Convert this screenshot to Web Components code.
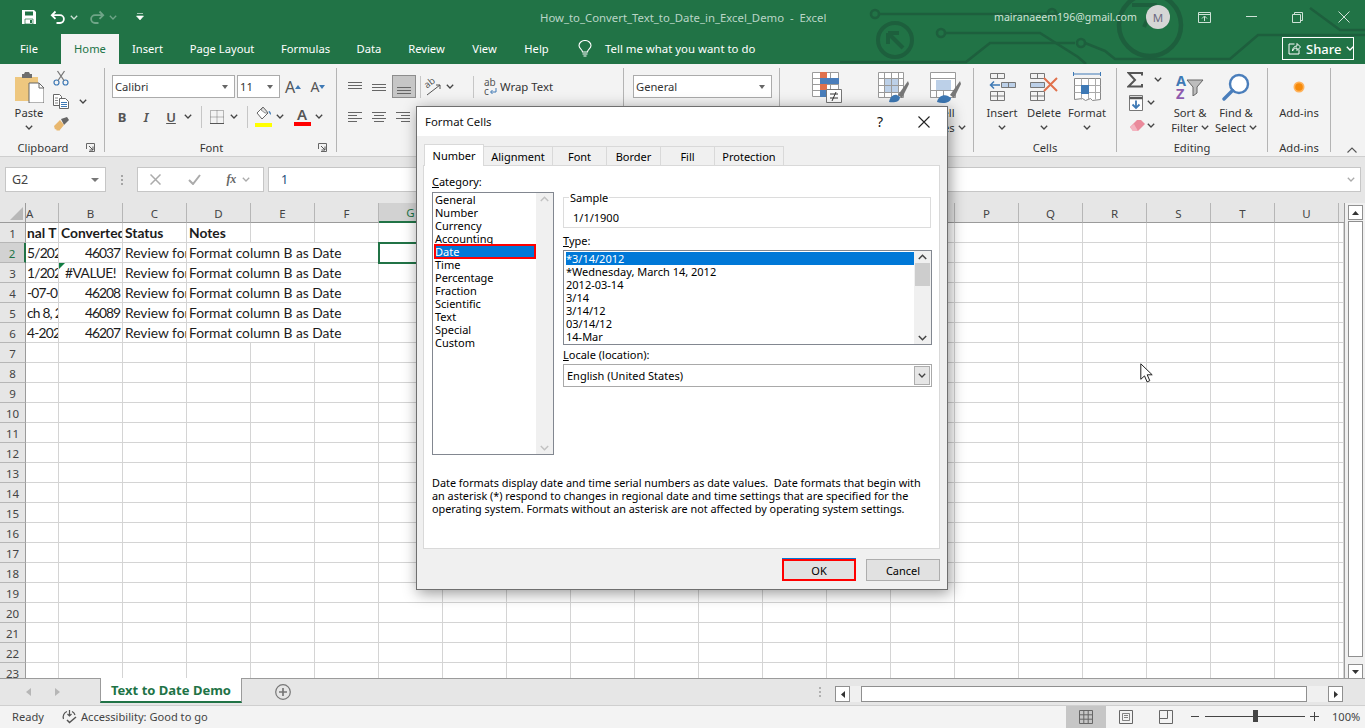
<!DOCTYPE html>
<html>
<head>
<meta charset="utf-8">
<title>Format Cells</title>
<style>
  html, body { margin: 0; padding: 0; height: 100%; overflow: hidden; background: #e6e6e6; }
</style>
</head>
<body>
<xl-app></xl-app>
<script>
const UI = '"Noto Sans", "Open Sans", sans-serif';
const DLG = '"Noto Sans", "Open Sans", sans-serif';
const CELL = 'Lato, "Liberation Sans", sans-serif';

// little helper, every element is the same shape: css + markup in an open shadow root
function make(tag, css, html) {
  customElements.define(tag, class extends HTMLElement {
    constructor() {
      super();
      this.attachShadow({ mode: 'open' });
      const body = typeof html === 'function' ? html(this) : html;
      this.shadowRoot.innerHTML = `<style>${css}</style>${body}`;
    }
  });
}

const svg = (w, h, inner, vb) => `<svg width="${w}" height="${h}" viewBox="${vb || `0 0 ${w} ${h}`}" style="display:block;flex:none">${inner}</svg>`;
const chev = (c = '#444') => svg(8, 5, `<path d="M.8.8 4 4 7.2.8" fill="none" stroke="${c}" stroke-width="1.3"/>`);
const lines = (rows) => svg(16, 14, rows.map(([x, y, w]) => `<path d="M${x} ${y + .5}h${w}" stroke="#666" stroke-width="1"/>`).join(''));

const ICON = {
  save: svg(16, 16, `<path d="M1 1h12l2 2v12H1z" fill="#fff"/><path d="M4 2.5h8v4H4z" fill="#217346"/><path d="M4 10h8v5H4z" fill="#fff" stroke="#217346" stroke-width=".7"/><path d="M9 11h2v3H9z" fill="#217346"/>`),
  undo: svg(16, 15, `<path d="M5.5 1.5 1.8 5.2l3.7 3.7M2 5.2h8a3.9 3.9 0 0 1 0 7.8H6.5" fill="none" stroke="#fff" stroke-width="1.8"/>`),
  redo: svg(16, 15, `<path d="M10.5 1.5l3.7 3.7-3.7 3.7M14 5.2H6a3.9 3.9 0 0 0 0 7.8h3.5" fill="none" stroke="#6fa588" stroke-width="1.8"/>`),
  qat: svg(8, 8, `<path d="M1 .5h6M.5 3h7L4 7z" fill="#fff" stroke="#fff" stroke-width=".6"/>`),
  bulb: svg(14, 17, `<path d="M4.5 12C4.5 9.5 1 8.7 1 5.5a6 5 0 0 1 12 0C13 8.7 9.5 9.5 9.5 12z" fill="none" stroke="#fff" stroke-width="1.1"/><path d="M4.5 14h5M5.5 16h3" stroke="#fff" stroke-width="1.1"/>`),
  share: svg(13, 13, `<path d="M6.5 2H1v10h10V7.5M4.5 9c0-3 2-5 4.500-5V1.500L12.500 5 9 8.500V6C7 6 5.500 7 4.500 9z" fill="none" stroke="#fff" stroke-width="1"/>`),
  paste: svg(30, 32, `<path d="M1 6h23v24H1z" fill="#eec77f"/><path d="M8 3h2l1-2h4l1 2h2v4H8z" fill="#6d6d6d"/><path d="M15 12h10l5 5v15H15z" fill="#fff" stroke="#666" stroke-width="1"/><path d="M25 12v5h5" fill="none" stroke="#666"/>`),
  cut: svg(16, 16, `<circle cx="3.5" cy="12.5" r="2.5" fill="none" stroke="#3e79b5" stroke-width="1.2"/><circle cx="12.5" cy="12.5" r="2.5" fill="none" stroke="#3e79b5" stroke-width="1.2"/><path d="M5 10.5 11.5 1M11 10.5 4.5 1" stroke="#777" stroke-width="1.3"/>`),
  copy: svg(16, 15, `<path d="M.5.5h6l2 2v9H.5z" fill="#fff" stroke="#666"/><path d="M6.5 4.5h6l3 3v7h-9z" fill="#fff" stroke="#666"/><path d="M2 4h3M2 6.500h3M2 9h3" stroke="#888"/><path d="M8 8.500h6M8 10.500h6M8 12.500h6" stroke="#3e79b5"/>`),
  painter: svg(16, 15, `<path d="M8 2l6-2 2 3-5 5z" fill="#666"/><path d="M1 9l6-6 4 5-5 6-1-1-1 1-1-2-1 .5z" fill="#e8b76e"/>`),
  launcher: svg(9, 9, `<path d="M.5 6V.5H8.500V8.500H3" fill="none" stroke="#666"/><path d="M3 3l4 4M7 3.500V7H3.500" fill="none" stroke="#555"/>`),
  borders: svg(14, 14, `<path d="M.5.5h13v13H.5zM7 .5v13M.5 7h13" fill="none" stroke="#777" stroke-dasharray="1 1"/><path d="M0 13.500h14" stroke="#555"/>`),
  bucket: svg(17, 17, `<path d="M8 1 2 7l5 6 6-6z" fill="#fff" stroke="#666"/><path d="M6 4 8 1l5 6h-3z" fill="#dedede" stroke="#555" stroke-width=".6"/><path d="M13.500 5c2 0 2.500 2 2.500 4l-1.500-1.500z" fill="#3e79b5"/>`),
  orientArrow: svg(16, 14, `<path d="M1 13 14 3M14 3h-4M14 3v4" fill="none" stroke="#555" stroke-width="1"/>`),
  wrapArrow: svg(8, 8, `<path d="M7 1v4H2M3.500 3 1.500 5l2 2" fill="none" stroke="#3e79b5" stroke-width="1"/>`),
  cf: svg(30, 31, `<path d="M.5.5h26v24H.5z" fill="#fff" stroke="#9a9a9a"/><path d="M.5 6.500h26M.5 12.500h26M.5 18.500h26M8.500.5v24M18.500.5v24" stroke="#9a9a9a" fill="none"/><path d="M8 0h7v6H8zM8 12h7v6H8z" fill="#e0714c"/><path d="M8 6h19v6H8zM8 18h7v7H8z" fill="#4a7ebb"/><path d="M14.500 17.500h15v13h-15z" fill="#fff" stroke="#777"/><path d="M18 22h8M18 26h8M24 20l-4 9" stroke="#333" fill="none"/>`),
  table: svg(31, 31, `<path d="M.5.5h25v25H.5z" fill="#fff" stroke="#9a9a9a"/><path d="M6 6h15v14H6z" fill="#bcd0e8"/><path d="M.5 6.500h25M.5 13.500h25M.5 20.500h25M6.500.5v25M13.500.5v25M20.500.5v25" stroke="#9a9a9a" fill="none"/><path d="M20 23 30 9l1 3-7 14z" fill="#777"/><path d="M11 30c1-5 4-8 8-7l3 2c0 5-6 6-11 5z" fill="#3e79b5"/>`),
  styles: svg(31, 31, `<path d="M.5.5h25v25H.5z" fill="#fff" stroke="#9a9a9a"/><path d="M.5 6.500h25" stroke="#9a9a9a"/><path d="M6 8h15v10H6z" fill="#bcd0e8"/><path d="M.5 18.500h25M.5 25.500h25M6.500 18.500v7M13.500 18.500v7" stroke="#9a9a9a"/><path d="M20 23 30 9l1 3-7 14z" fill="#777"/><path d="M7 30c1-5 6-8 11-6l3 2c0 5-8 6-14 4z" fill="#3e79b5"/>`),
  insert: svg(27, 28, `<path d="M1.500.5h14v5h-14zM8.500.5v5" fill="none" stroke="#777"/><path d="M12.500 9.500h14v5h-14zM19.500 9.500v5" fill="#bcd0e8" stroke="#777"/><path d="M1.500 18.500h14v9h-14zM8.500 18.500v9M1.500 23h14" fill="none" stroke="#777"/><path d="M11 12H2M5 8.500 1.500 12 5 15.500" fill="none" stroke="#3e79b5" stroke-width="1.5"/>`),
  del: svg(30, 28, `<path d="M1.500.5h14v5h-14zM8.500.5v5" fill="none" stroke="#777"/><path d="M1.500 9.500h14v5h-14z" fill="#bcd0e8" stroke="#777"/><path d="M1.500 18.500h14v9h-14zM8.500 18.500v9M1.500 23h14" fill="none" stroke="#777"/><path d="M15 5l13 13M28 5 15 18" stroke="#e0714c" stroke-width="2"/>`),
  format: svg(29, 30, `<path d="M.5 2h27M.5 0v4M27.500 0v4" stroke="#3e79b5" fill="none"/><path d="M1.500 6.500h26v21l-8 1-2-2-5 2-3-2-8 1z" fill="#fff" stroke="#888"/><path d="M1.500 13.500h26M1.500 20.500h26M8.500 6.500v21M15.500 6.500v21M22.500 6.500v21" stroke="#aaa" fill="none"/><path d="M8 13h8v9H8z" fill="#3e79b5"/>`),
  sum: svg(16, 16, `<path d="M15 3.500V1H1.500L8 8l-6.500 6.500H15V12" fill="none" stroke="#555" stroke-width="2"/>`),
  fill: svg(14, 16, `<path d="M.5.5h13v15H.5z" fill="#fff" stroke="#777"/><path d="M.5 3h13" stroke="#555" stroke-width="2.5"/><path d="M7 5.500v7M3.500 9.500 7 13l3.500-3.500" fill="none" stroke="#3e79b5" stroke-width="1.8"/>`),
  clear: svg(16, 13, `<path d="M1 8 8 1h4l4 4-7 7H4z" fill="#ea8a9b"/><path d="M1 8l3 4h5L5 5z" fill="#f4b4c0"/>`),
  funnel: svg(18, 17, `<path d="M1 1h16l-6 7v6l-4 3V8z" fill="#bdbdbd" stroke="#666"/>`),
  find: svg(28, 28, `<circle cx="17" cy="11" r="9" fill="#fff" stroke="#4a7ebb" stroke-width="2.4"/><path d="M10.500 17.500 2 26" stroke="#4a7ebb" stroke-width="3.4" stroke-linecap="round"/>`),
  addin: svg(12, 12, `<circle cx="6" cy="6" r="5.5" fill="#ffb25a"/><circle cx="6" cy="6" r="3.8" fill="#f58a0b"/>`),
  collapse: svg(10, 6, `<path d="M.5 5.500 5 1l4.500 4.500" fill="none" stroke="#555" stroke-width="1.1"/>`),
  acc: svg(17, 15, `<path d="M6 2.500A6 6 0 0 0 2.500 10M11 2.500a6 6 0 0 1 3 3.500M8.500 1v6M6.500 5l2 2 2-2" fill="none" stroke="#555" stroke-width="1.2"/><path d="M6 11l2.500 2.500L15 8" fill="none" stroke="#555" stroke-width="1.5"/>`),
  cursor: svg(13, 20, `<path d="M.8.8v15.500l3.700-3.400 2.600 6 2.700-1.200-2.600-5.900h5z" fill="#fff" stroke="#222" stroke-width="1"/>`)
};

make('xl-titlebar', `
  :host { display: block; height: 64px; background: #217346; position: relative; overflow: hidden; color: #fff; font: 11.2px ${UI}; }
  .decor { position: absolute; left: 840px; top: 0; }
  .row1 { height: 34px; display: flex; align-items: center; position: relative; }
  .qat { width: 540px; display: flex; align-items: center; flex: none; padding-left: 21px; box-sizing: border-box; }
  .title { width: 454px; flex: none; color: #b9d5c6; font-size: 11.35px; white-space: pre; }
  .mail { width: 152px; flex: none; color: #cfe2d7; font-size: 10.6px; }
  .avatar { width: 24px; height: 24px; border-radius: 50%; background: #d6d6d6; color: #6d6a82; font-size: 11.5px; display: flex; align-items: center; justify-content: center; flex: none; }
  .win { display: grid; grid-template-columns: 47px 47px 45px 47px; justify-items: center; align-items: center; margin-left: 11px; }
  .row2 { height: 30px; display: flex; align-items: stretch; position: relative; padding-left: 3px; }
  .tab { display: flex; align-items: center; justify-content: center; flex: none; padding-bottom: 2px; box-sizing: border-box; }
  .tab.on { background: #f3f3f3; color: #217346; }
  .tell { display: flex; align-items: center; gap: 13px; margin-left: 16px; font-size: 11.4px; width: 704px; flex: none; padding-bottom: 2px; box-sizing: border-box; }
  .sharebox { width: 72px; height: 23px; border: 1px solid #fff; box-sizing: border-box; margin-top: 3px; display: flex; align-items: center; gap: 5px; padding-left: 5px; font-size: 13px; font-weight: 500; }
`, `
  <svg class="decor" width="525" height="64" fill="none" stroke="#1d5f3d" stroke-width="2.6">
    <circle cx="35" cy="14" r="4"/><path d="M39 14h180"/><circle cx="212" cy="13" r="4"/>
    <circle cx="101" cy="33" r="4"/><path d="M105 33h95l38 24 8 7"/>
    <path d="M-10 62h136l24-19h85"/><circle cx="241" cy="43" r="4"/><path d="M245 43l20 8 10 8h115l28-24h107"/>
    <circle cx="55" cy="40" r="17" stroke-width="4"/><path d="M48 33l15 15M48 33h11M48 33v11" stroke-width="4"/>
    <circle cx="310" cy="25" r="31" stroke-width="4.5"/><path d="M292 5h22l-10 22" stroke-width="4"/>
    <path d="M470 8l30 22h25"/>
  </svg>
  <div class="row1">
    <div class="qat">
      ${ICON.save}<span style="width:13px"></span>${ICON.undo}<span style="width:4px"></span>${chev('#cfe2d7')}
      <span style="width:11px"></span>${ICON.redo}<span style="width:4px"></span>${chev('#6fa588')}
      <span style="width:19px"></span>${ICON.qat}
    </div>
    <div class="title">How_to_Convert_Text_to_Date_in_Excel_Demo  -  Excel</div>
    <div class="mail">mairanaeem196@gmail.com</div>
    <div class="avatar">M</div>
    <div class="win">
      ${svg(13, 11, `<path d="M.5.5h12v10H.5zM.5 2.500h12M6.500 9V4.500M4 6.500l2.500-2.500L9 6.500" fill="none" stroke="#cfe2d7"/>`)}
      ${svg(11, 2, `<path d="M0 .5h11" stroke="#cfe2d7"/>`)}
      ${svg(11, 11, `<path d="M.5 2.500h8v8h-8zM2.500 2.500V.5h8v8h-2" fill="none" stroke="#cfe2d7"/>`)}
      ${svg(12, 12, `<path d="M.5.5l11 11M11.500.5l-11 11" stroke="#cfe2d7"/>`)}
    </div>
  </div>
  <div class="row2">
    <div class="tab" style="width:52px;margin-right:6px">File</div>
    <div class="tab on" style="width:58px">Home</div>
    <div class="tab" style="width:57px">Insert</div>
    <div class="tab" style="width:92px">Page Layout</div>
    <div class="tab" style="width:75px">Formulas</div>
    <div class="tab" style="width:52px">Data</div>
    <div class="tab" style="width:63px">Review</div>
    <div class="tab" style="width:53px">View</div>
    <div class="tab" style="width:51px">Help</div>
    <div class="tell">${ICON.bulb}<span>Tell me what you want to do</span></div>
    <div class="sharebox">${ICON.share}<span>Share</span>${chev('#fff')}</div>
  </div>
`);

make('xl-group', `
  :host { display: flex; flex-direction: column; flex: none; box-sizing: border-box; height: 84px; margin-top: 4px; border-right: 1px solid #b4b4b4; }
  .body { flex: 1; min-height: 0; }
  .foot { height: 16px; margin-bottom: -3px; display: flex; align-items: center; font: 11.2px ${UI}; color: #333; }
  .label { flex: 1; text-align: center; }
  .launch { width: 18px; flex: none; display: flex; align-items: center; justify-content: flex-start; }
`, (el) => `
  <div class="body"><slot></slot></div>
  <div class="foot"><div class="label">${el.getAttribute('label') || ''}</div>${el.hasAttribute('launcher') ? `<div class="launch">${ICON.launcher}</div>` : ''}</div>
`);

// tall ribbon button: icon on top, one or two lines under it
make('xl-big', `
  :host { display: flex; flex-direction: column; align-items: center; flex: none; font: 11.2px/15px ${UI}; color: #333; white-space: nowrap; }
  .ic { height: 34px; display: flex; align-items: center; justify-content: center; margin-top: 2px; margin-bottom: 1px; }
  .ln { height: 15px; display: flex; align-items: center; gap: 3px; }
`, (el) => {
  const a = el.getAttribute('a') || '';
  const b = el.getAttribute('b');
  return `<div class="ic"><slot></slot></div>
    <div class="ln">${a}</div>
    <div class="ln">${b ? b + ' ' + chev() : (el.hasAttribute('nochev') ? '' : chev())}</div>`;
});

make('xl-combo', `
  :host { display: flex; align-items: center; box-sizing: border-box; height: 23px; background: #fff; border: 1px solid #ababab; font: 11.2px ${UI}; color: #333; padding: 0 3px 0 2px; flex: none; }
  .t { flex: 1; white-space: nowrap; overflow: hidden; }
  .a { width: 0; height: 0; border: 3.5px solid transparent; border-top: 4px solid #666; border-bottom: 0; margin-right: 3px; }
`, (el) => `<div class="t">${el.getAttribute('value')}</div><div class="a"></div>`);

make('xl-ribbon', `
  :host { display: flex; height: 93px; box-sizing: border-box; background: #f3f3f3; border-bottom: 1px solid #cfcfcf; font: 11.2px ${UI}; color: #333; }
  .rows { display: flex; flex-direction: column; gap: 7px; padding-top: 7px; }
  .row { display: flex; align-items: center; height: 23px; }
  .c { display: flex; align-items: center; justify-content: center; flex: none; height: 22px; font: 13px ${UI}; color: #555; }
  .sep { width: 1px; height: 22px; background: #c6c6c6; flex: none; }
  .active { width: 24px; height: 23px; background: #c6c6c6; border: 1px solid #8d8d8d; box-sizing: border-box; display: flex; align-items: center; justify-content: center; margin-left: 1px; }
  .grow { font: 16px ${UI}; color: #555; }
  .bar { width: 17px; height: 4px; display: block; }
  .stack { display: flex; flex-direction: column; align-items: center; }
  .clipcol { display: flex; flex-direction: column; padding-top: 2px; gap: 8px; align-items: flex-start; margin-left: -2px; }
  .flexrow { display: flex; height: 100%; }
  .coll { margin-left: auto; align-self: flex-end; margin-right: 8px; margin-bottom: 3px; }
  .ed { width: 42px; padding-left: 2px; box-sizing: border-box; display: flex; flex-direction: column; }
  .ed div { height: 23px; display: flex; align-items: center; }
  .orient { width: 18px; height: 18px; position: relative; flex: none; }
  .orient span { position: absolute; left: 0; top: 0; font: 9.5px/10px ${UI}; color: #555; transform: rotate(-38deg); }
  .orient svg { position: absolute; left: 2px; top: 4px; }
  .wrapi { width: 15px; flex: none; display: flex; flex-direction: column; font: 10px/9px ${UI}; color: #555; margin-left: -5px; }
  .wrapi span { display: flex; align-items: center; }
  .az { display: flex; flex-direction: column; font: 700 14.5px/13px ${UI}; }
`, `
  <xl-group label="Clipboard" launcher style="width:105px">
    <div class="flexrow">
      <xl-big a="Paste" style="width:52px;margin-left:3px">${ICON.paste}</xl-big>
      <div class="clipcol">${ICON.cut}<span style="display:flex;align-items:center;gap:10px">${ICON.copy}${chev()}</span>${ICON.painter}</div>
    </div>
  </xl-group>
  <xl-group label="Font" launcher style="width:232px">
    <div class="rows">
      <div class="row" style="padding-left:7px">
        <xl-combo value="Calibri" style="width:123px"></xl-combo>
        <xl-combo value="11" style="width:43px;margin-left:2px"></xl-combo>
        <div class="c grow" style="width:26px"><span>A</span>${svg(6, 4, `<path d="M0 4l3-4 3 4z" fill="#3e79b5"/>`)}</div>
        <div class="c grow" style="width:24px;font-size:14px"><span>A</span>${svg(6, 4, `<path d="M0 0l3 4 3-4z" fill="#3e79b5"/>`)}</div>
      </div>
      <div class="row" style="padding-left:5px">
        <div class="c" style="width:24px;font-weight:700">B</div>
        <div class="c" style="width:24px;font-style:italic;font-weight:600">I</div>
        <div class="c" style="width:26px;font-weight:600;text-decoration:underline">U</div>
        <div class="c" style="width:8px">${chev()}</div>
        <div class="c" style="width:18px"><span class="sep"></span></div>
        <div class="c" style="width:13px">${ICON.borders}</div>
        <div class="c" style="width:22px">${chev()}</div>
        <div class="c" style="width:5px"><span class="sep"></span></div>
        <div class="c" style="width:17px;margin-left:5px"><span class="stack">${ICON.bucket}<span class="bar" style="background:#ffff00"></span></span></div>
        <div class="c" style="width:16px">${chev()}</div>
        <div class="c" style="width:28px"><span class="stack" style="font-size:15px;line-height:15px;font-weight:600">A<span class="bar" style="background:#ff0000"></span></span></div>
        <div class="c" style="width:6px">${chev()}</div>
      </div>
    </div>
  </xl-group>
  <xl-group style="width:287px">
    <div class="rows">
      <div class="row" style="padding-left:6px">
        <div class="c" style="width:24px">${lines([[1, 2, 14], [1, 5, 14], [1, 8, 14]])}</div>
        <div class="c" style="width:24px">${lines([[1, 4, 14], [1, 7, 14], [1, 10, 14]])}</div>
        <div class="active">${lines([[1, 7, 14], [1, 10, 14], [1, 13, 14]])}</div>
        <div class="c" style="width:8px"><span class="sep"></span></div>
        <div class="orient"><span>ab</span>${ICON.orientArrow}</div>
        <div class="c" style="width:16px">${chev()}</div>
        <div class="c" style="width:31px"><span class="sep"></span></div>
        <div class="wrapi"><span>ab</span><span>c${ICON.wrapArrow}</span></div>
        <div class="c" style="margin-left:1px;font-size:11.4px;color:#333">Wrap Text</div>
      </div>
      <div class="row" style="padding-left:6px">
        <div class="c" style="width:24px">${lines([[1, 2, 14], [1, 5, 9], [1, 8, 14], [1, 11, 9]])}</div>
        <div class="c" style="width:24px">${lines([[1, 2, 14], [3, 5, 10], [1, 8, 14], [3, 11, 10]])}</div>
        <div class="c" style="width:24px">${lines([[1, 2, 14], [6, 5, 9], [1, 8, 14], [6, 11, 9]])}</div>
      </div>
    </div>
  </xl-group>
  <xl-group style="width:156px">
    <div class="rows"><div class="row" style="padding-left:9px"><xl-combo value="General" style="width:139px"></xl-combo></div></div>
  </xl-group>
  <xl-group style="width:194px">
    <div class="flexrow" style="padding-left:13px">
      <xl-big nochev style="width:67px">${ICON.cf}</xl-big>
      <xl-big nochev style="width:67px">${ICON.table}</xl-big>
      <xl-big a="Cell" b="Styles" style="width:36px">${ICON.styles}</xl-big>
    </div>
  </xl-group>
  <xl-group label="Cells" style="width:143px">
    <div class="flexrow" style="padding-left:7px">
      <xl-big a="Insert" style="width:42px">${ICON.insert}</xl-big>
      <xl-big a="Delete" style="width:42px">${ICON.del}</xl-big>
      <xl-big a="Format" style="width:44px">${ICON.format}</xl-big>
    </div>
  </xl-group>
  <xl-group label="Editing" style="width:151px">
    <div class="flexrow" style="padding-left:8px">
      <div class="ed">
        <div style="gap:11px">${ICON.sum}${chev()}</div>
        <div style="gap:4px;margin-left:2px">${ICON.fill}${chev()}</div>
        <div style="gap:2px;margin-left:2px">${ICON.clear}${chev()}</div>
      </div>
      <xl-big a="Sort &amp;" b="Filter" style="width:46px"><div class="az"><span style="color:#3e79b5">A</span><span style="color:#8e5bae">Z</span></div>${ICON.funnel}</xl-big>
      <xl-big a="Find &amp;" b="Select" style="width:46px">${ICON.find}</xl-big>
    </div>
  </xl-group>
  <xl-group label="Add-ins" style="width:63px">
    <xl-big a="Add-ins" nochev style="width:62px">${ICON.addin}</xl-big>
  </xl-group>
  <div class="coll">${ICON.collapse}</div>
`);

make('xl-formula-bar', `
  :host { display: flex; height: 46px; box-sizing: border-box; padding: 10px 4px 11px 5px; background: #e6e6e6; font: 12.5px ${UI}; color: #444; }
  .box { background: #fff; border: 1px solid #c6c6c6; box-sizing: border-box; height: 25px; display: flex; align-items: center; flex: none; }
  .name { width: 101px; padding: 0 6px; justify-content: space-between; }
  .tri { width: 0; height: 0; border: 4px solid transparent; border-top: 4px solid #777; border-bottom: 0; }
  .grip { width: 31px; display: flex; flex-direction: column; align-items: center; justify-content: center; gap: 2px; flex: none; }
  .grip i { width: 2px; height: 2px; background: #a5a5a5; display: block; }
  .fx { width: 127px; justify-content: space-between; padding: 0 13px 0 12px; color: #8a8a8a; }
  .in { flex: 1; margin-left: 4px; padding: 0 5px 0 12px; justify-content: space-between; color: #1f4e79; }
`, `
  <div class="box name"><span>G2</span><span class="tri"></span></div>
  <div class="grip"><i></i><i></i><i></i></div>
  <div class="box fx">
    ${svg(11, 11, `<path d="M.5.5l10 10M10.500.5l-10 10" stroke="#ababab" stroke-width="1.5"/>`)}
    <span style="width:16px"></span>
    ${svg(13, 11, `<path d="M1 6l4 4 7-9" fill="none" stroke="#ababab" stroke-width="2"/>`)}
    <span style="width:14px"></span>
    <i style="font:italic 700 12px 'Liberation Serif',serif;color:#666">fx</i>
    ${chev('#aaa')}
  </div>
  <div class="box in"><span>1</span>${chev('#aaa')}</div>
`);

const COLS = 'BCDEFGHIJKLMNOPQRSTU'.split('');
const ROWS = {
  1: ['nal T', 'Converted', 'Status', 'Notes'],
  2: ['5/202', '46037', 'Review for', 'Format column B as Date'],
  3: ['1/202', '#VALUE!', 'Review for', 'Format column B as Date'],
  4: ['-07-05', '46208', 'Review for', 'Format column B as Date'],
  5: ['ch 8, 2', '46089', 'Review for', 'Format column B as Date'],
  6: ['4-2026', '46207', 'Review for', 'Format column B as Date']
};

function sheetCells() {
  let h = `<div class="hd corner"><span></span></div><div class="hd col" style="justify-content:flex-start"><span>A</span></div>`;
  COLS.forEach((c) => { h += `<div class="hd col ${c === 'G' ? 'sel' : ''}">${c}</div>`; });
  h += `<div class="hd col blank"></div>`;
  for (let r = 1; r <= 23; r++) {
    const v = ROWS[r] || [];
    const b = r === 1 ? 'b' : '';
    h += `<div class="hd row ${r === 2 ? 'sel' : ''}">${r}</div>`;
    h += `<div class="c first ${b}">${v[0] || ''}</div>`;
    const isNum = /^\d+$/.test(v[1] || '');
    const err = v[1] === '#VALUE!';
    h += `<div class="c ${b} ${isNum ? 'num' : ''} ${err ? 'err' : ''}">${v[1] || ''}</div>`;
    h += `<div class="c ${b}">${v[2] || ''}</div>`;
    if (r >= 2 && r <= 6) {
      h += `<div class="c" style="grid-column:span 3">${v[3]}</div>`;
    } else {
      h += `<div class="c ${b}">${v[3] || ''}</div><div class="c"></div><div class="c"></div>`;
    }
    COLS.slice(5).forEach((c) => { h += `<div class="c ${c === 'G' && r === 2 ? 'cur' : ''}"></div>`; });
    h += `<div class="c"></div>`;
  }
  return h;
}

make('xl-sheet', `
  :host { display: block; width: 1345px; height: 475px; overflow: hidden; flex: none; background: #fff; border-right: 1px solid #9b9b9b; box-sizing: border-box; }
  .g { display: grid; grid-template-columns: 26px 33px repeat(20, 64px) 5px; grid-auto-rows: 20px; width: 1344px; }
  .hd { background: #e6e6e6; display: flex; align-items: center; justify-content: center; font: 11.5px ${UI}; color: #444; box-sizing: border-box; padding-top: 1px; min-width: 0; overflow: hidden; }
  .hd.col { border-right: 1px solid #b6b6b6; border-bottom: 1px solid #9b9b9b; }
  .hd.row { border-right: 1px solid #9b9b9b; border-bottom: 1px solid #b6b6b6; }
  .hd.col.blank { border-right: 0; }
  .hd.col.sel { background: #d2d2d2; color: #217346; border-bottom: 2px solid #217346; }
  .hd.row.sel { background: #d2d2d2; color: #217346; border-right: 2px solid #217346; }
  .corner { border-right: 1px solid #9b9b9b; border-bottom: 1px solid #9b9b9b; justify-content: flex-end; align-items: flex-end; padding: 0 2px 2px 0; }
  .corner span { width: 0; height: 0; border-left: 13px solid transparent; border-bottom: 13px solid #b8b8b8; }
  .c { border-right: 1px solid #d4d4d4; border-bottom: 1px solid #d4d4d4; box-sizing: border-box; font: 13.8px ${CELL}; color: #1c1c1c; display: flex; align-items: center; padding: 0 2px; white-space: nowrap; overflow: hidden; position: relative; min-width: 0; }
  .b { font-weight: 700; }
  .first { padding: 0 0 0 1px; letter-spacing: -.8px; }
  .first.b { letter-spacing: 0; }
  .num { justify-content: flex-end; letter-spacing: -1px; padding-right: 2px; }
  .err { padding-left: 6px; letter-spacing: -.5px; }
  .err::before { content: ""; position: absolute; left: 0; top: 0; border-top: 6px solid #107c41; border-right: 6px solid transparent; }
  .cur { outline: 2px solid #217346; outline-offset: -1px; z-index: 2; overflow: visible; }
`, `<div class="g">${sheetCells()}</div>`);

make('xl-vscroll', `
  :host { display: flex; flex-direction: column; align-items: center; flex: 1; height: 476px; box-sizing: border-box; padding: 2px 0 0 0; background: #f0f0f0; }
  .btn { width: 15px; height: 15px; background: #fff; border: 1px solid #8f8f8f; box-sizing: border-box; display: flex; align-items: center; justify-content: center; flex: none; }
  .th { width: 15px; flex: 1; background: #fff; border: 1px solid #8f8f8f; box-sizing: border-box; margin: 1px 0 7px; }
`, `
  <div class="btn">${svg(7, 4, `<path d="M0 4l3.500-4L7 4z" fill="#333"/>`)}</div>
  <div class="th"></div>
  <div class="btn">${svg(7, 4, `<path d="M0 0l3.500 4L7 0z" fill="#333"/>`)}</div>
`);

make('xl-sheet-tabs', `
  :host { display: flex; align-items: flex-start; height: 28px; box-sizing: border-box; background: #e6e6e6; border-top: 1px solid #9b9b9b; border-bottom: 1px solid #cfcfcf; font: 700 13px ${UI}; flex: none; }
  .nav { width: 100px; display: flex; gap: 24px; padding: 9px 0 0 26px; box-sizing: border-box; height: 26px; flex: none; }
  .tab { width: 142px; height: 25px; margin-top: -1px; padding-top: 1px; background: #fff; border: 1px solid #9b9b9b; border-top: 0; border-bottom: 2px solid #217346; box-sizing: border-box; color: #217346; display: flex; align-items: center; justify-content: center; flex: none; }
  .plus { margin: 5px 0 0 33px; width: 15px; height: 15px; flex: none; }
  .split { margin-left: 529px; display: flex; flex-direction: column; gap: 2px; padding-top: 8px; width: 16px; flex: none; }
  .split i { width: 2px; height: 2px; background: #b0b0b0; display: block; }
  .hs { display: flex; align-items: center; width: 508px; height: 16px; margin-top: 7px; background: #f0f0f0; flex: none; }
  .btn { width: 15px; height: 16px; background: #fff; border: 1px solid #8f8f8f; box-sizing: border-box; display: flex; align-items: center; justify-content: center; flex: none; }
  .th { height: 16px; width: 446px; margin: 0 21px 0 11px; background: #fff; border: 1px solid #8f8f8f; box-sizing: border-box; flex: none; }
`, `
  <div class="nav">
    ${svg(5, 8, `<path d="M5 0 0 4l5 4z" fill="#b6b6b6"/>`)}
    ${svg(5, 8, `<path d="M0 0l5 4-5 4z" fill="#b6b6b6"/>`)}
  </div>
  <div class="tab">Text to Date Demo</div>
  <div class="plus">${svg(16, 16, `<circle cx="8" cy="8" r="7.3" fill="none" stroke="#777" stroke-width="1.2"/><path d="M8 4v8M4 8h8" stroke="#777" stroke-width="1.7"/>`)}</div>
  <div class="split"><i></i><i></i><i></i></div>
  <div class="hs">
    <div class="btn">${svg(4, 7, `<path d="M4 0 0 3.500 4 7z" fill="#333"/>`)}</div>
    <div class="th"></div>
    <div class="btn">${svg(4, 7, `<path d="M0 0l4 3.500L0 7z" fill="#333"/>`)}</div>
  </div>
`);

make('xl-status', `
  :host { display: flex; align-items: center; height: 22px; box-sizing: border-box; background: #f3f3f3; font: 11.1px ${UI}; color: #444; flex: none; }
  .ready { width: 61px; padding: 0 0 1px 12px; box-sizing: border-box; flex: none; }
  .acc { display: flex; align-items: center; gap: 3px; width: 1005px; flex: none; padding-bottom: 1px; box-sizing: border-box; }
  .view { width: 40px; height: 22px; display: flex; align-items: center; justify-content: center; flex: none; }
  .view.on { background: #c6c6c6; }
  .zoom { display: flex; align-items: center; margin-left: 5px; flex: none; padding-bottom: 1px; }
  .tr { width: 100px; height: 1px; background: #444; margin: 0 5px 0 6px; position: relative; }
  .tr i { position: absolute; left: 48px; top: -6px; width: 5px; height: 12px; background: #444; display: block; }
  .pc { margin-left: 13px; }
`, `
  <div class="ready">Ready</div>
  <div class="acc">${ICON.acc}<span>Accessibility: Good to go</span></div>
  <div class="view on">${svg(14, 14, `<path d="M.5.5h13v13H.5zM.5 4.800h13M.5 9.200h13M4.800.5v13M9.200.5v13" fill="none" stroke="#666"/>`)}</div>
  <div class="view">${svg(14, 14, `<path d="M.5.5h13v13H.5z" fill="none" stroke="#666"/><path d="M3.500 3.500h7v7h-7zM5 5.500h4M5 7.500h4" fill="none" stroke="#666" stroke-width=".8"/>`)}</div>
  <div class="view">${svg(14, 14, `<path d="M.5.5h13v13H.5zM.5 8.500h8V.5" fill="none" stroke="#666"/>`)}</div>
  <div class="zoom">
    ${svg(8, 1, `<path d="M0 .5h8" stroke="#444"/>`)}
    <div class="tr"><i></i></div>
    ${svg(9, 9, `<path d="M0 4.500h9M4.500 0v9" stroke="#444"/>`)}
    <div class="pc">100%</div>
  </div>
`);

make('xl-list', `
  :host { display: flex; box-sizing: border-box; background: #fff; border: 1px solid #828790; overflow: hidden; }
  .items { flex: 1; min-width: 0; padding: 1px 0 0 2px; display: flex; flex-direction: column; }
  .bar { width: 17px; background: #f0f0f0; display: flex; flex-direction: column; align-items: center; flex: none; padding: 3px 0; box-sizing: border-box; }
  .th { width: 15px; height: 23px; background: #cdcdcd; margin-top: 3px; }
  .sp { flex: 1; }
`, (el) => `
  <div class="items"><slot></slot></div>
  <div class="bar">
    ${svg(9, 6, `<path d="M.8 5 4.500 1.300 8.200 5" fill="none" stroke="${el.hasAttribute('dim') ? '#c2c2c2' : '#444'}" stroke-width="1.5"/>`)}
    ${el.hasAttribute('dim') ? '' : '<div class="th"></div>'}
    <div class="sp"></div>
    ${svg(9, 6, `<path d="M.8 1 4.500 4.700 8.200 1" fill="none" stroke="${el.hasAttribute('dim') ? '#c2c2c2' : '#444'}" stroke-width="1.5"/>`)}
  </div>
`);

make('xl-item', `
  :host { display: flex; align-items: center; height: 13px; font: 11px/13px ${DLG}; color: #000; white-space: nowrap; flex: none; }
  :host([sel]) { background: #0078d7; color: #fff; }
`, `<slot></slot>`);

make('xl-dtab', `
  :host { display: flex; align-items: center; justify-content: center; box-sizing: border-box; height: 20px; background: #f0f0f0; border: 1px solid #d9d9d9; border-bottom: 0; border-left: 0; font: 11px ${DLG}; color: #000; flex: none; margin-top: 2px; }
  :host([on]) { height: 22px; margin-top: 0; background: #fff; border-left: 1px solid #d9d9d9; margin-bottom: -1px; z-index: 1; position: relative; }
`, `<slot></slot>`);

make('xl-button', `
  :host { display: flex; align-items: center; justify-content: center; width: 74px; height: 22px; box-sizing: border-box; background: #e1e1e1; border: 1px solid #adadad; font: 11px ${DLG}; color: #000; flex: none; }
  :host([mark]) { border: 2px solid #f00; box-shadow: 0 -1px 0 #0078d7; }
`, `<slot></slot>`);

make('xl-dialog', `
  :host { position: absolute; left: 416px; top: 106px; width: 532px; height: 484px; box-sizing: border-box; background: #f0f0f0; border: 1px solid #6f6f6f; box-shadow: 2px 3px 14px rgba(0,0,0,.42); display: flex; flex-direction: column; font: 11px ${DLG}; color: #000; z-index: 5; }
  .head { height: 29px; background: #fff; display: flex; align-items: center; padding: 0 17px 0 8px; flex: none; font: 11.4px ${UI}; color: #111; }
  .head .t { flex: 1; }
  .q { font-size: 14px; margin-right: 35px; }
  .tabs { display: flex; padding: 8px 0 0 7px; height: 21px; flex: none; box-sizing: content-box; }
  .panel { height: 384px; margin: 0 7px 0 6px; box-sizing: border-box; background: #fff; border: 1px solid #d9d9d9; padding: 9px 7px 0 8px; flex: none; position: relative; }
  .cols { display: grid; grid-template-columns: 122px 369px; column-gap: 9px; height: 289px; }
  .lab { height: 14px; line-height: 14px; }
  .lab u { text-decoration: underline; }
  .fs { height: 31px; border: 1px solid #dcdcdc; box-sizing: border-box; margin: 22px 1px 0 0; position: relative; padding: 13px 0 0 9px; line-height: 14px; }
  .leg { position: absolute; left: 5px; top: -7px; background: #fff; padding: 0 1px; line-height: 14px; }
  .select { height: 23px; margin-top: 2px; border: 1px solid #a9a9a9; display: flex; align-items: center; padding: 0 0 1px 3px; box-sizing: border-box; }
  .select span { flex: 1; }
  .dd { width: 16px; height: 19px; margin-right: 1px; background: #e6e6e6; border: 1px solid #adadad; box-sizing: border-box; display: flex; align-items: center; justify-content: center; }
  .desc { margin-top: 12px; line-height: 13px; font-size: 10.85px; white-space: pre; }
  .foot { display: flex; justify-content: flex-end; gap: 10px; padding: 10px 7px 0 0; }
`, `
  <div class="head">
    <div class="t">Format Cells</div>
    <div class="q">?</div>
    ${svg(12, 12, `<path d="M.5.5l11 11M11.500.5l-11 11" stroke="#222" stroke-width="1.1"/>`)}
  </div>
  <div class="tabs">
    <xl-dtab on style="width:60px">Number</xl-dtab>
    <xl-dtab style="width:69px">Alignment</xl-dtab>
    <xl-dtab style="width:54px">Font</xl-dtab>
    <xl-dtab style="width:54px">Border</xl-dtab>
    <xl-dtab style="width:54px">Fill</xl-dtab>
    <xl-dtab style="width:69px">Protection</xl-dtab>
  </div>
  <div class="panel">
    <div class="cols">
      <div>
        <div class="lab"><u>C</u>ategory:</div>
        <xl-list dim style="height:263px;margin-top:3px">
          <xl-item style="margin-top:-1px">General</xl-item><xl-item>Number</xl-item><xl-item>Currency</xl-item><xl-item>Accounting</xl-item>
          <xl-item sel style="outline:2px solid #f00;outline-offset:-1px;width:100px">Date</xl-item>
          <xl-item>Time</xl-item><xl-item>Percentage</xl-item><xl-item>Fraction</xl-item><xl-item>Scientific</xl-item>
          <xl-item>Text</xl-item><xl-item>Special</xl-item><xl-item>Custom</xl-item>
        </xl-list>
      </div>
      <div>
        <div class="fs"><span class="leg">Sample</span>1/1/1900</div>
        <div class="lab" style="margin-top:6px;height:15px"><u>T</u>ype:</div>
        <xl-list style="height:95px;margin-top:1px">
          <xl-item sel>*3/14/2012</xl-item><xl-item>*Wednesday, March 14, 2012</xl-item><xl-item>2012-03-14</xl-item>
          <xl-item>3/14</xl-item><xl-item>3/14/12</xl-item><xl-item>03/14/12</xl-item><xl-item>14-Mar</xl-item>
        </xl-list>
        <div class="lab" style="margin-top:3px"><u>L</u>ocale (location):</div>
        <div class="select"><span>English (United States)</span><div class="dd">${chev('#444')}</div></div>
      </div>
    </div>
    <div class="desc">Date formats display date and time serial numbers as date values.  Date formats that begin with
an asterisk (*) respond to changes in regional date and time settings that are specified for the
operating system. Formats without an asterisk are not affected by operating system settings.</div>
  </div>
  <div class="foot">
    <xl-button mark>OK</xl-button>
    <xl-button>Cancel</xl-button>
  </div>
`);

make('xl-app', `
  :host { display: flex; flex-direction: column; width: 1365px; height: 728px; position: relative; overflow: hidden; background: #e6e6e6; }
  .mid { display: flex; flex: none; height: 475px; }
  .cursor { position: absolute; left: 1140px; top: 363px; z-index: 9; }
`, `
  <xl-titlebar></xl-titlebar>
  <xl-ribbon></xl-ribbon>
  <xl-formula-bar></xl-formula-bar>
  <div class="mid"><xl-sheet></xl-sheet><xl-vscroll></xl-vscroll></div>
  <xl-sheet-tabs></xl-sheet-tabs>
  <xl-status></xl-status>
  <xl-dialog></xl-dialog>
  <div class="cursor">${ICON.cursor}</div>
`);
</script>
</body>
</html>
